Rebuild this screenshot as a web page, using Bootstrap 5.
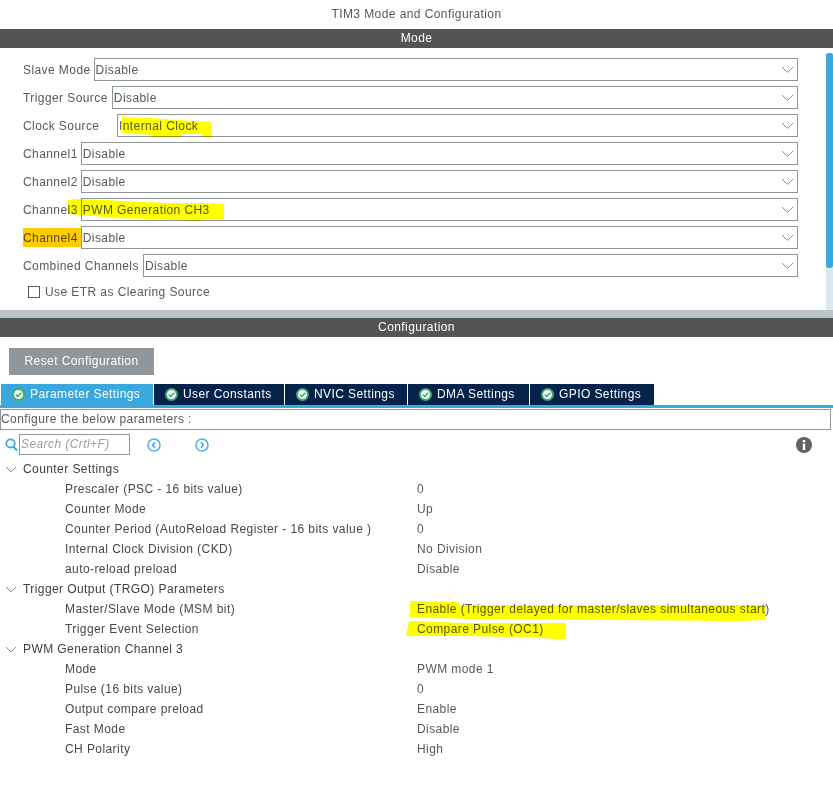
<!DOCTYPE html>
<html lang="en">
<head>
<meta charset="utf-8">
<title>TIM3 Mode and Configuration</title>
<link rel="stylesheet" href="https://cdn.jsdelivr.net/npm/bootstrap@5.3.0/dist/css/bootstrap.min.css">
<style>
html,body{margin:0;background:#fff;overflow:hidden}
body{position:relative;width:833px;height:785px;font-family:"Liberation Sans",Arial,sans-serif;font-size:12px;letter-spacing:.42px;color:#555a5c;line-height:20px}
.ttl{height:29px;line-height:29px;text-align:center}
.barhead{height:19px;line-height:19px;background:#535554;color:#fff;text-align:center}
.modearea{height:262px}
.modeform{padding:10px 28px 0 23px;gap:5px}
.modeline{height:23px;align-items:center}
.modeline label{white-space:nowrap;margin-right:3px}
.modeline label.wider{margin-right:4px}
.ddl{flex:1 1 auto;height:23px;border:1px solid #8f979b;display:flex;align-items:center;justify-content:space-between;padding:0 3px 0 1px;background:#fff}
.ddl svg{width:13px;height:8px}
.modeline label.lb-cs{width:94px;margin-right:0}
.etr{margin:0 0 0 5px;height:20px;gap:5px}
.tick{width:12px;height:12px;border:1px solid #555a5c;display:block}
.sbar{width:7px;margin-top:5px;background:#d9e8f5}
.sthumb{height:215px;background:#3aa8dc;border-radius:3px}
.gband{height:8px;background:#b8c4c8}
.rbtn{display:block;margin:11px 0 9px 9px;width:145px;height:27px;padding:0;background:#8f979c;border:0;border-radius:0;color:#fff;font-size:12px;letter-spacing:.42px;line-height:27px}
.tabsrow{height:21px;gap:1px;padding-left:1px;flex-wrap:nowrap;border:0}
.tabsrow .nav-link{height:21px;padding:0 0 0 11px;border:0;border-radius:0;background:#04224a;color:#fff;display:flex;align-items:center;gap:5px;line-height:21px}
.tabsrow .nav-link.active{background:#3aa8dc;color:#fff}
.tabsrow svg{width:13px;height:13px}
.w1{width:152px}.w2{width:130px}.w3{width:122px}.w4{width:121px}.w5{width:124px}
.tline{height:3px;background:#3aa8dc}
.cfgbox{height:21px;margin:1px 2px 0 0;border:1px solid #8f979b;line-height:19px;color:#555a5c}
.srow{height:29px;padding:0 0 0 5px}
.srch{width:111px;height:21px;margin-left:1px;border:1px solid #8f979b;padding-left:1px;line-height:19px;color:#9a9fa2;font-style:italic;white-space:nowrap}
.prev-ic{margin-left:17px}
.next-ic{margin-left:34px}
.info-ic{margin-right:21px}
.rw{height:20px;align-items:center;white-space:nowrap}
.rw.grp{padding-left:5px;color:#3c4042}
.rw.grp svg{width:12px;height:7px;margin-right:6px}
.rw .nm{width:417px;padding-left:65px;color:#45494b}
.rw .vl{flex:0 0 auto}
.marks{position:absolute;left:0;top:0;width:833px;height:785px;mix-blend-mode:multiply;pointer-events:none}
</style>
</head>
<body>
<div class="ttl">TIM3 Mode and Configuration</div>
<div class="barhead">Mode</div>
<div class="modearea d-flex">
  <div class="flex-grow-1 d-flex flex-column modeform">
    <div class="d-flex modeline"><label>Slave Mode</label><div class="ddl"><span>Disable</span><svg viewBox="0 0 13 8"><path d="M1 1l5.500 5.500L12 1" fill="none" stroke="#8a9194" stroke-width="1"/></svg></div></div>
    <div class="d-flex modeline"><label class="wider">Trigger Source</label><div class="ddl"><span>Disable</span><svg viewBox="0 0 13 8"><path d="M1 1l5.500 5.500L12 1" fill="none" stroke="#8a9194" stroke-width="1"/></svg></div></div>
    <div class="d-flex modeline"><label class="lb-cs">Clock Source</label><div class="ddl"><span>Internal Clock</span><svg viewBox="0 0 13 8"><path d="M1 1l5.500 5.500L12 1" fill="none" stroke="#8a9194" stroke-width="1"/></svg></div></div>
    <div class="d-flex modeline"><label>Channel1</label><div class="ddl"><span>Disable</span><svg viewBox="0 0 13 8"><path d="M1 1l5.500 5.500L12 1" fill="none" stroke="#8a9194" stroke-width="1"/></svg></div></div>
    <div class="d-flex modeline"><label>Channel2</label><div class="ddl"><span>Disable</span><svg viewBox="0 0 13 8"><path d="M1 1l5.500 5.500L12 1" fill="none" stroke="#8a9194" stroke-width="1"/></svg></div></div>
    <div class="d-flex modeline"><label>Channel3</label><div class="ddl"><span>PWM Generation CH3</span><svg viewBox="0 0 13 8"><path d="M1 1l5.500 5.500L12 1" fill="none" stroke="#8a9194" stroke-width="1"/></svg></div></div>
    <div class="d-flex modeline"><label>Channel4</label><div class="ddl"><span>Disable</span><svg viewBox="0 0 13 8"><path d="M1 1l5.500 5.500L12 1" fill="none" stroke="#8a9194" stroke-width="1"/></svg></div></div>
    <div class="d-flex modeline"><label class="wider">Combined Channels</label><div class="ddl"><span>Disable</span><svg viewBox="0 0 13 8"><path d="M1 1l5.500 5.500L12 1" fill="none" stroke="#8a9194" stroke-width="1"/></svg></div></div>
    <div class="d-flex align-items-center etr"><span class="tick"></span><span>Use ETR as Clearing Source</span></div>
  </div>
  <div class="sbar"><div class="sthumb"></div></div>
</div>
<div class="gband"></div>
<div class="barhead">Configuration</div>
<button type="button" class="btn rbtn">Reset Configuration</button>
<ul class="nav nav-tabs tabsrow">
  <li class="nav-item"><a class="nav-link active w1" href="#"><svg viewBox="0 0 13 13"><circle cx="6.500" cy="6.500" r="5.500" fill="#fff" stroke="#3fae6a" stroke-width="2"/><path d="M3.800 6.500l2 2 3.500-3.700" fill="none" stroke="#3fae6a" stroke-width="1.600"/></svg>Parameter Settings</a></li>
  <li class="nav-item"><a class="nav-link w2" href="#"><svg viewBox="0 0 13 13"><circle cx="6.500" cy="6.500" r="5.500" fill="#fff" stroke="#3fae6a" stroke-width="2"/><path d="M3.800 6.500l2 2 3.500-3.700" fill="none" stroke="#3fae6a" stroke-width="1.600"/></svg>User Constants</a></li>
  <li class="nav-item"><a class="nav-link w3" href="#"><svg viewBox="0 0 13 13"><circle cx="6.500" cy="6.500" r="5.500" fill="#fff" stroke="#3fae6a" stroke-width="2"/><path d="M3.800 6.500l2 2 3.500-3.700" fill="none" stroke="#3fae6a" stroke-width="1.600"/></svg>NVIC Settings</a></li>
  <li class="nav-item"><a class="nav-link w4" href="#"><svg viewBox="0 0 13 13"><circle cx="6.500" cy="6.500" r="5.500" fill="#fff" stroke="#3fae6a" stroke-width="2"/><path d="M3.800 6.500l2 2 3.500-3.700" fill="none" stroke="#3fae6a" stroke-width="1.600"/></svg>DMA Settings</a></li>
  <li class="nav-item"><a class="nav-link w5" href="#"><svg viewBox="0 0 13 13"><circle cx="6.500" cy="6.500" r="5.500" fill="#fff" stroke="#3fae6a" stroke-width="2"/><path d="M3.800 6.500l2 2 3.500-3.700" fill="none" stroke="#3fae6a" stroke-width="1.600"/></svg>GPIO Settings</a></li>
</ul>
<div class="tline"></div>
<div class="cfgbox">Configure the below parameters :</div>
<div class="srow d-flex align-items-center">
  <svg width="13" height="14" viewBox="0 0 13 14"><circle cx="5.500" cy="5.500" r="4.200" fill="none" stroke="#3aa8dc" stroke-width="1.800"/><path d="M8.500 8.800l3.500 3.700" stroke="#3aa8dc" stroke-width="2.200"/></svg>
  <div class="srch">Search (Crtl+F)</div>
  <svg class="prev-ic" width="14" height="14" viewBox="0 0 14 14"><circle cx="7" cy="7" r="6" fill="none" stroke="#4fb4e4" stroke-width="1.600"/><path d="M8.200 4.300L5.500 7l2.700 2.700" fill="none" stroke="#3aa8dc" stroke-width="1.400"/></svg>
  <svg class="next-ic" width="14" height="14" viewBox="0 0 14 14"><circle cx="7" cy="7" r="6" fill="none" stroke="#4fb4e4" stroke-width="1.600"/><path d="M5.800 4.300L8.500 7l-2.700 2.700" fill="none" stroke="#3aa8dc" stroke-width="1.400"/></svg>
  <svg class="ms-auto info-ic" width="16" height="16" viewBox="0 0 16 16"><circle cx="8" cy="8" r="8" fill="#5f6264"/><rect x="6.800" y="6.500" width="2.400" height="6.500" fill="#fff"/><rect x="6.800" y="3" width="2.400" height="2.300" fill="#fff"/></svg>
</div>
<div>
  <div class="d-flex rw grp"><svg viewBox="0 0 12 7"><path d="M1 1l5 5 5-5" fill="none" stroke="#8a9194"/></svg>Counter Settings</div>
  <div class="d-flex rw"><div class="nm">Prescaler (PSC - 16 bits value)</div><div class="vl">0</div></div>
  <div class="d-flex rw"><div class="nm">Counter Mode</div><div class="vl">Up</div></div>
  <div class="d-flex rw"><div class="nm">Counter Period (AutoReload Register - 16 bits value )</div><div class="vl">0</div></div>
  <div class="d-flex rw"><div class="nm">Internal Clock Division (CKD)</div><div class="vl">No Division</div></div>
  <div class="d-flex rw"><div class="nm">auto-reload preload</div><div class="vl">Disable</div></div>
  <div class="d-flex rw grp"><svg viewBox="0 0 12 7"><path d="M1 1l5 5 5-5" fill="none" stroke="#8a9194"/></svg>Trigger Output (TRGO) Parameters</div>
  <div class="d-flex rw"><div class="nm">Master/Slave Mode (MSM bit)</div><div class="vl">Enable (Trigger delayed for master/slaves simultaneous start)</div></div>
  <div class="d-flex rw"><div class="nm">Trigger Event Selection</div><div class="vl">Compare Pulse (OC1)</div></div>
  <div class="d-flex rw grp"><svg viewBox="0 0 12 7"><path d="M1 1l5 5 5-5" fill="none" stroke="#8a9194"/></svg>PWM Generation Channel 3</div>
  <div class="d-flex rw"><div class="nm">Mode</div><div class="vl">PWM mode 1</div></div>
  <div class="d-flex rw"><div class="nm">Pulse (16 bits value)</div><div class="vl">0</div></div>
  <div class="d-flex rw"><div class="nm">Output compare preload</div><div class="vl">Enable</div></div>
  <div class="d-flex rw"><div class="nm">Fast Mode</div><div class="vl">Disable</div></div>
  <div class="d-flex rw"><div class="nm">CH Polarity</div><div class="vl">High</div></div>
</div>
<svg class="marks" viewBox="0 0 833 785">
  <polygon fill="#ffff00" points="122,117 150,118 175,120 212,122 212,137 201,137 201,134 182,134 182,137 152,137 152,135 122,133"/>
  <polygon fill="#ffff00" points="68,200 76,199 105,200 140,202 170,203 205,203 224,204 224,219 200,219 200,221 174,220 150,219 110,218 97,216 81,215 68,214"/>
  <polygon fill="#ffcc00" points="23,228 81,228 81,247 23,247"/>
  <polygon fill="#ffff00" points="410,601 458,602 460,605 766,605 766,620 740,621 470,619 410,617"/>
  <polygon fill="#ffff00" points="409,621 440,622 460,623 566,623 566,639 555,639 530,637 460,636 406,636"/>
</svg>
<script src="https://cdn.jsdelivr.net/npm/bootstrap@5.3.0/dist/js/bootstrap.bundle.min.js"></script>
</body>
</html>
